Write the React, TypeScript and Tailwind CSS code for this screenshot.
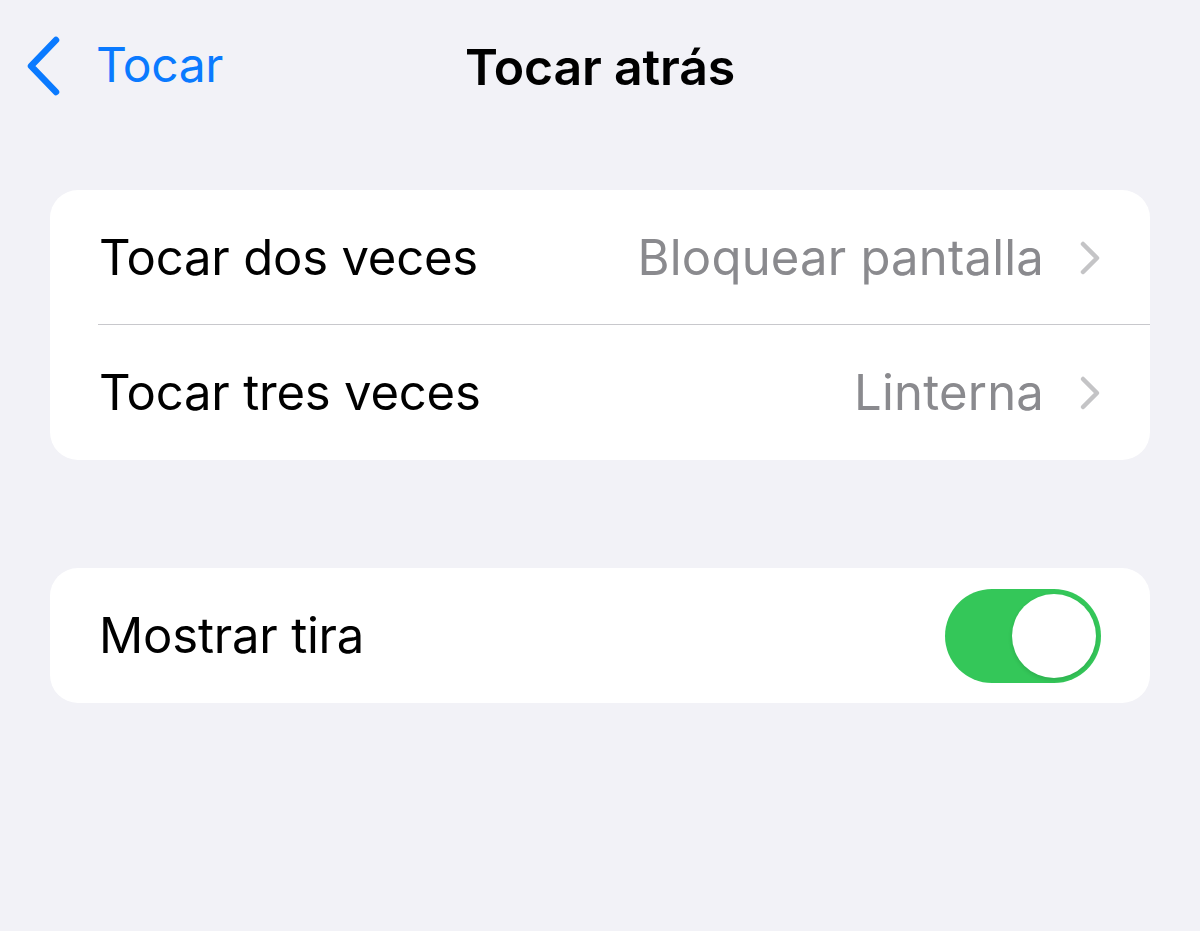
import React from "react";

function Chevron({ className }: { className?: string }) {
  return (
    <svg viewBox="0 0 24 36" className={className} fill="none">
      <path d="M5 4 L19 18 L5 32" stroke="currentColor" strokeWidth="4.5" strokeLinecap="round" strokeLinejoin="round" />
    </svg>
  );
}

function BackChevron() {
  return (
    <svg viewBox="0 0 36 60" className="w-[36px] h-[60px] text-[#0a7aff]" fill="none">
      <path d="M30 4 L5 30 L30 56" stroke="currentColor" strokeWidth="6.5" strokeLinecap="round" strokeLinejoin="round" />
    </svg>
  );
}

function NavRow({ label, value, divider }: { label: string; value: string; divider?: boolean }) {
  return (
    <div className="relative flex items-center h-[135px] pl-[49px] pr-[48px]">
      <span className="text-black">{label}</span>
      <span className="ml-auto text-[#8a8a8e] tracking-[0.2px]">{value}</span>
      <Chevron className="w-[24px] h-[36px] ml-[34px] text-[#c4c4c6]" />
      {divider && <div className="absolute left-[48px] right-0 bottom-0 h-[1.5px] bg-[#c8c8cc]" />}
    </div>
  );
}

export default function App() {
  return (
    <div
      className="w-[1200px] h-[931px] bg-[#f2f2f7] text-[49px] tracking-[-0.2px]"
      style={{ fontFamily: "Inter, 'Noto Sans', sans-serif" }}
    >
      <header className="relative flex items-center justify-center h-[136px]">
        <div className="absolute left-[26px] top-[37px] flex items-center">
          <div className="-mt-[7px]">
            <BackChevron />
          </div>
          <span className="ml-[34px] -mt-[8px] text-[#0a7aff] text-[48px] tracking-[-0.4px]">Tocar</span>
        </div>
        <h1 className="font-semibold text-[50px] text-black -mt-[2px]">Tocar atrás</h1>
      </header>

      <div className="px-[50px] pt-[54px]">
        <div className="bg-white rounded-[28px] overflow-hidden">
          <NavRow label="Tocar dos veces" value="Bloquear pantalla" divider />
          <NavRow label="Tocar tres veces" value="Linterna" />
        </div>

        <div className="mt-[108px] bg-white rounded-[28px] h-[135px] flex items-center pl-[49px] pr-[49px]">
          <span className="text-black">Mostrar tira</span>
          <div className="ml-auto w-[156px] h-[94px] rounded-full bg-[#34c759] p-[5px] flex justify-end">
            <div className="w-[84px] h-[84px] rounded-full bg-white shadow-[0_2px_4px_rgba(0,0,0,0.12)]" />
          </div>
        </div>
      </div>
    </div>
  );
}
